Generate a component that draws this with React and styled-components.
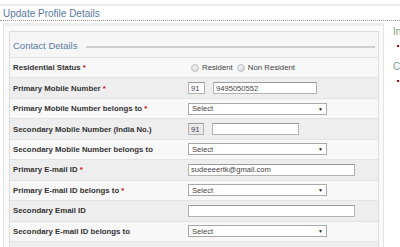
import React from 'react';
import styled, { createGlobalStyle } from 'styled-components';

const GlobalStyle = createGlobalStyle`
  html, body {
    margin: 0;
    padding: 0;
    background: #ffffff;
    overflow: hidden;
  }
  body {
    font-family: "Liberation Sans", Arial, sans-serif;
  }
`;

const rows = [
  { label: 'Residential Status', required: true, kind: 'radio' },
  { label: 'Primary Mobile Number', required: true, kind: 'phone', value: '9495050552' },
  { label: 'Primary Mobile Number belongs to', required: true, kind: 'select' },
  { label: 'Secondary Mobile Number (India No.)', kind: 'phone2' },
  { label: 'Secondary Mobile Number belongs to', kind: 'select' },
  { label: 'Primary E-mail ID', required: true, kind: 'email', value: 'sudeeeertk@gmail.com' },
  { label: 'Primary E-mail ID belongs to', required: true, kind: 'select' },
  { label: 'Secondary Email ID', kind: 'email', value: '' },
  { label: 'Secondary E-mail ID belongs to', kind: 'select' },
  { label: '', kind: 'empty' },
];

const App = () => {
  const renderField = (row) => {
    switch (row.kind) {
      case 'radio':
        return (
          <RadioGroup>
            <Radio />
            <RadioText>Resident</RadioText>
            <Radio />
            <RadioText>Non Resident</RadioText>
          </RadioGroup>
        );
      case 'phone':
        return (
          <FieldLine>
            <Input $w={17} defaultValue="91" readOnly />
            <Input $w={104} defaultValue={row.value} readOnly />
          </FieldLine>
        );
      case 'phone2':
        return (
          <FieldLine>
            <Input $w={16} $disabled defaultValue="91" readOnly />
            <Input $w={87} defaultValue="" readOnly />
          </FieldLine>
        );
      case 'select':
        return (
          <FakeSelect>
            <span>Select</span>
            <Caret>▼</Caret>
          </FakeSelect>
        );
      case 'email':
        return <Input $w={167} defaultValue={row.value} readOnly />;
      default:
        return null;
    }
  };

  return (
    <>
      <GlobalStyle />
      <Page>
        <TopRule />
        <Title>Update Profile Details</Title>
        <Body>
          <Outer>
            <Inner>
              <Legend>
                <LegendText>Contact Details</LegendText>
                <LegendLine />
              </Legend>
              {rows.map((row, index) => (
                <Row key={index} $dark={index % 2 === 1}>
                  <Label>
                    {row.label}
                    {row.required && <Req> *</Req>}
                  </Label>
                  <Field>{renderField(row)}</Field>
                </Row>
              ))}
            </Inner>
          </Outer>
          <Side>
            <SideHead>In</SideHead>
            <Bullet />
            <SideHead $top={14}>C</SideHead>
            <Bullet />
          </Side>
        </Body>
      </Page>
    </>
  );
};

const Page = styled.div`
  width: 400px;
  height: 247px;
  overflow: hidden;
  display: flex;
  flex-direction: column;
`;

const TopRule = styled.div`
  margin-top: 4px;
  height: 0;
  border-top: 2px solid #ebebeb;
`;

const Title = styled.div`
  padding: 2px 0 0 3px;
  height: 12px;
  font-size: 10px;
  line-height: 12px;
  color: #5a7aa3;
  border-bottom: 1px dotted #9a9a9a;
`;

const Body = styled.div`
  display: flex;
  align-items: flex-start;
  margin-top: 2px;
`;

const Outer = styled.div`
  flex: 0 0 auto;
  width: 370px;
  margin-left: 3px;
  padding: 5px 4px 0 5px;
  background: #fafafa;
  border: 1px solid #e3e3e3;
  border-top: 3px solid #efefef;
`;

const Inner = styled.div`
  border: 1px solid #dcdcdc;
  background: #f6f6f6;
`;

const Legend = styled.div`
  display: flex;
  align-items: center;
  height: 25px;
  padding: 0 3px 0 3px;
`;

const LegendText = styled.span`
  font-size: 9.5px;
  color: #5a7aa3;
  padding-top: 1px;
`;

const LegendLine = styled.div`
  flex: 1;
  height: 2px;
  background: #cfcfcf;
  margin: 4px 0 0 9px;
`;

const Row = styled.div`
  display: grid;
  grid-template-columns: 178px 1fr;
  align-items: center;
  height: 20.45px;
  box-sizing: border-box;
  border-top: 1px solid #e3e3e3;
  background: ${(p) => (p.$dark ? '#eeeeee' : '#f8f8f8')};
`;

const Label = styled.div`
  padding-left: 3px;
  font-size: 7.8px;
  font-weight: bold;
  color: #333333;
  white-space: nowrap;
`;

const Req = styled.span`
  color: #cc0000;
`;

const Field = styled.div`
  display: flex;
  align-items: center;
`;

const FieldLine = styled.div`
  display: flex;
  align-items: center;
  gap: 8px;
`;

const Input = styled.input`
  box-sizing: border-box;
  width: ${(p) => p.$w}px;
  height: 12px;
  margin: 0;
  padding: 0 2px;
  border: 1px solid #b3b3b3;
  border-top-color: #9c9c9c;
  background: ${(p) => (p.$disabled ? '#e9e9e9' : '#ffffff')};
  font-family: "Liberation Sans", Arial, sans-serif;
  font-size: 7.6px;
  color: #444444;
  outline: none;
`;

const FakeSelect = styled.div`
  box-sizing: border-box;
  width: 139px;
  height: 12px;
  display: flex;
  align-items: center;
  justify-content: space-between;
  padding: 0 3px 0 3px;
  border: 1px solid #a9a9a9;
  background: #ffffff;
  font-size: 7.6px;
  color: #444444;
`;

const Caret = styled.span`
  font-size: 5px;
  color: #222222;
`;

const RadioGroup = styled.div`
  display: flex;
  align-items: center;
  padding-left: 3px;
`;

const Radio = styled.span`
  width: 6px;
  height: 6px;
  border-radius: 50%;
  border: 1px solid #c2c2c2;
  background: radial-gradient(circle at 40% 35%, #f4f4f4, #d2d2d2);
  margin-right: 3px;
`;

const RadioText = styled.span`
  font-size: 7.8px;
  color: #444444;
  margin-right: 4px;
`;

const Side = styled.div`
  flex: 0 0 auto;
  margin-left: 9px;
  padding-top: 3px;
`;

const SideHead = styled.div`
  font-size: 10px;
  line-height: 12px;
  color: #7f9d8a;
  margin-top: ${(p) => p.$top || 0}px;
  white-space: nowrap;
`;

const Bullet = styled.div`
  width: 2px;
  height: 2px;
  background: #cc0000;
  margin: 7px 0 0 4px;
`;

export default App;
